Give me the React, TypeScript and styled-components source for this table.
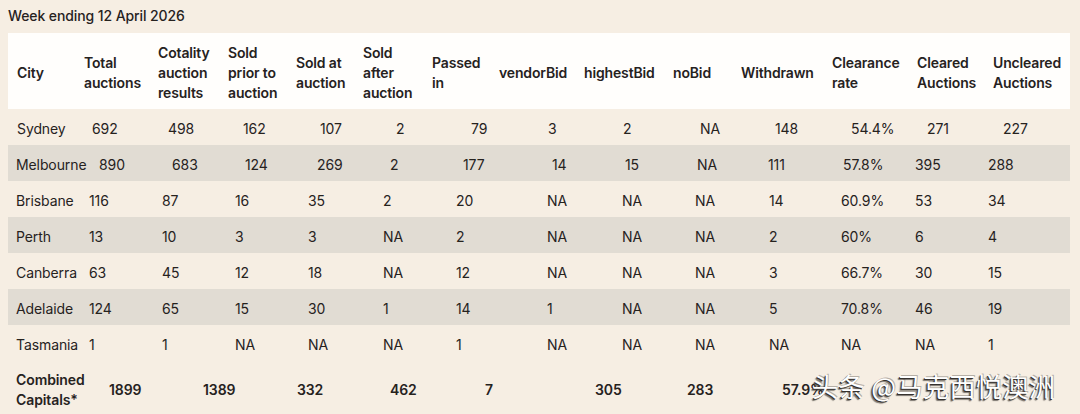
import React from "react";
import styled, { createGlobalStyle } from "styled-components";

const Global = createGlobalStyle`
  html, body { margin: 0; padding: 0; background: #f6eee3; }
  body { font-family: Inter, "Noto Sans", "Liberation Sans", sans-serif; color: #26221e; }
`;

const Page = styled.div`
  position: relative;
  width: 1080px;
  height: 414px;
  overflow: hidden;
  background: #f6eee3;
  padding: 6px 10px 0 8px;
  box-sizing: border-box;
`;

const Title = styled.div`
  font-size: 14px;
  line-height: 20px;
  font-weight: 500;
  letter-spacing: -0.1px;
  color: #26221e;
  margin-bottom: 7px;
`;

const Table = styled.div`
  display: flex;
  flex-direction: column;
  width: 1062px;
`;

const Row = styled.div<{ $cols: string; $tone: "head" | "light" | "grey" | "total"; $pad: number }>`
  display: grid;
  grid-template-columns: ${(p) => p.$cols};
  align-items: center;
  box-sizing: border-box;
  padding-left: ${(p) => p.$pad}px;
  padding-top: 3px;
  height: ${(p) => (p.$tone === "head" ? 76 : p.$tone === "total" ? 54 : 36)}px;
  background: ${(p) =>
    p.$tone === "head" ? "#fffefc" : p.$tone === "grey" ? "#e1dcd3" : "transparent"};
  font-size: 14px;
  line-height: 20px;
  font-weight: ${(p) => (p.$tone === "head" || p.$tone === "total" ? 600 : 400)};
  letter-spacing: ${(p) => (p.$tone === "head" ? "-0.15px" : "-0.1px")};
`;

const Cell = styled.div`
  white-space: nowrap;
  text-align: left;
`;

const Watermark = styled.div`
  position: absolute;
  left: 812px;
  top: 370px;
  font-family: "Noto Sans CJK SC", "Noto Sans", sans-serif;
  font-size: 26px;
  line-height: 32px;
  font-weight: 400;
  color: #ffffff;
  letter-spacing: 0.5px;
  text-shadow: -1px 1px 0 #35312e, -2px 2px 1px rgba(40, 36, 33, 0.6), 1px -1px 0 rgba(60, 55, 50, 0.35);
  white-space: nowrap;
`;

const cols = (w: number[]) => w.map((x) => `${x}px`).join(" ") + " 1fr";

const headCols = cols([67, 74, 70, 68, 67, 69, 67, 85, 89, 68, 91, 85, 76]);
const sydCols = cols([75, 76, 75, 77, 76, 75, 77, 75, 77, 75, 76, 76, 76]);
const melCols = cols([83, 73, 73, 72, 73, 73, 89, 73, 72, 71, 75, 72, 73]);
const regCols = cols([73, 73, 73, 73, 75, 73, 91, 75, 73, 74, 72, 74, 73]);
const totCols = cols([93, 94, 94, 93, 95, 110, 92, 95]);

const headers: React.ReactNode[] = [
  "City",
  <>Total<br />auctions</>,
  <>Cotality<br />auction<br />results</>,
  <>Sold<br />prior to<br />auction</>,
  <>Sold at<br />auction</>,
  <>Sold<br />after<br />auction</>,
  <>Passed<br />in</>,
  "vendorBid",
  "highestBid",
  "noBid",
  "Withdrawn",
  <>Clearance<br />rate</>,
  <>Cleared<br />Auctions</>,
  <>Uncleared<br />Auctions</>,
];

type R = { cols: string; tone: "light" | "grey"; pad: number; cells: string[] };

const rows: R[] = [
  { cols: sydCols, tone: "light", pad: 9, cells: ["Sydney", "692", "498", "162", "107", "2", "79", "3", "2", "NA", "148", "54.4%", "271", "227"] },
  { cols: melCols, tone: "grey", pad: 8, cells: ["Melbourne", "890", "683", "124", "269", "2", "177", "14", "15", "NA", "111", "57.8%", "395", "288"] },
  { cols: regCols, tone: "light", pad: 8, cells: ["Brisbane", "116", "87", "16", "35", "2", "20", "NA", "NA", "NA", "14", "60.9%", "53", "34"] },
  { cols: regCols, tone: "grey", pad: 8, cells: ["Perth", "13", "10", "3", "3", "NA", "2", "NA", "NA", "NA", "2", "60%", "6", "4"] },
  { cols: regCols, tone: "light", pad: 8, cells: ["Canberra", "63", "45", "12", "18", "NA", "12", "NA", "NA", "NA", "3", "66.7%", "30", "15"] },
  { cols: regCols, tone: "grey", pad: 8, cells: ["Adelaide", "124", "65", "15", "30", "1", "14", "1", "NA", "NA", "5", "70.8%", "46", "19"] },
  { cols: regCols, tone: "light", pad: 8, cells: ["Tasmania", "1", "1", "NA", "NA", "NA", "1", "NA", "NA", "NA", "NA", "NA", "NA", "1"] },
];

const totals: React.ReactNode[] = [
  <>Combined<br />Capitals*</>,
  "1899",
  "1389",
  "332",
  "462",
  "7",
  "305",
  "283",
  "57.9%",
];

export default function App() {
  return (
    <Page>
      <Global />
      <Title>Week ending 12 April 2026</Title>
      <Table>
        <Row $cols={headCols} $tone="head" $pad={9}>
          {headers.map((h, i) => (
            <Cell key={i}>{h}</Cell>
          ))}
        </Row>
        {rows.map((r) => (
          <Row key={r.cells[0]} $cols={r.cols} $tone={r.tone} $pad={r.pad}>
            {r.cells.map((c, i) => (
              <Cell key={i}>{c}</Cell>
            ))}
          </Row>
        ))}
        <Row $cols={totCols} $tone="total" $pad={8}>
          {totals.map((c, i) => (
            <Cell key={i}>{c}</Cell>
          ))}
        </Row>
      </Table>
      <Watermark>头条 @马克西悦澳洲</Watermark>
    </Page>
  );
}
